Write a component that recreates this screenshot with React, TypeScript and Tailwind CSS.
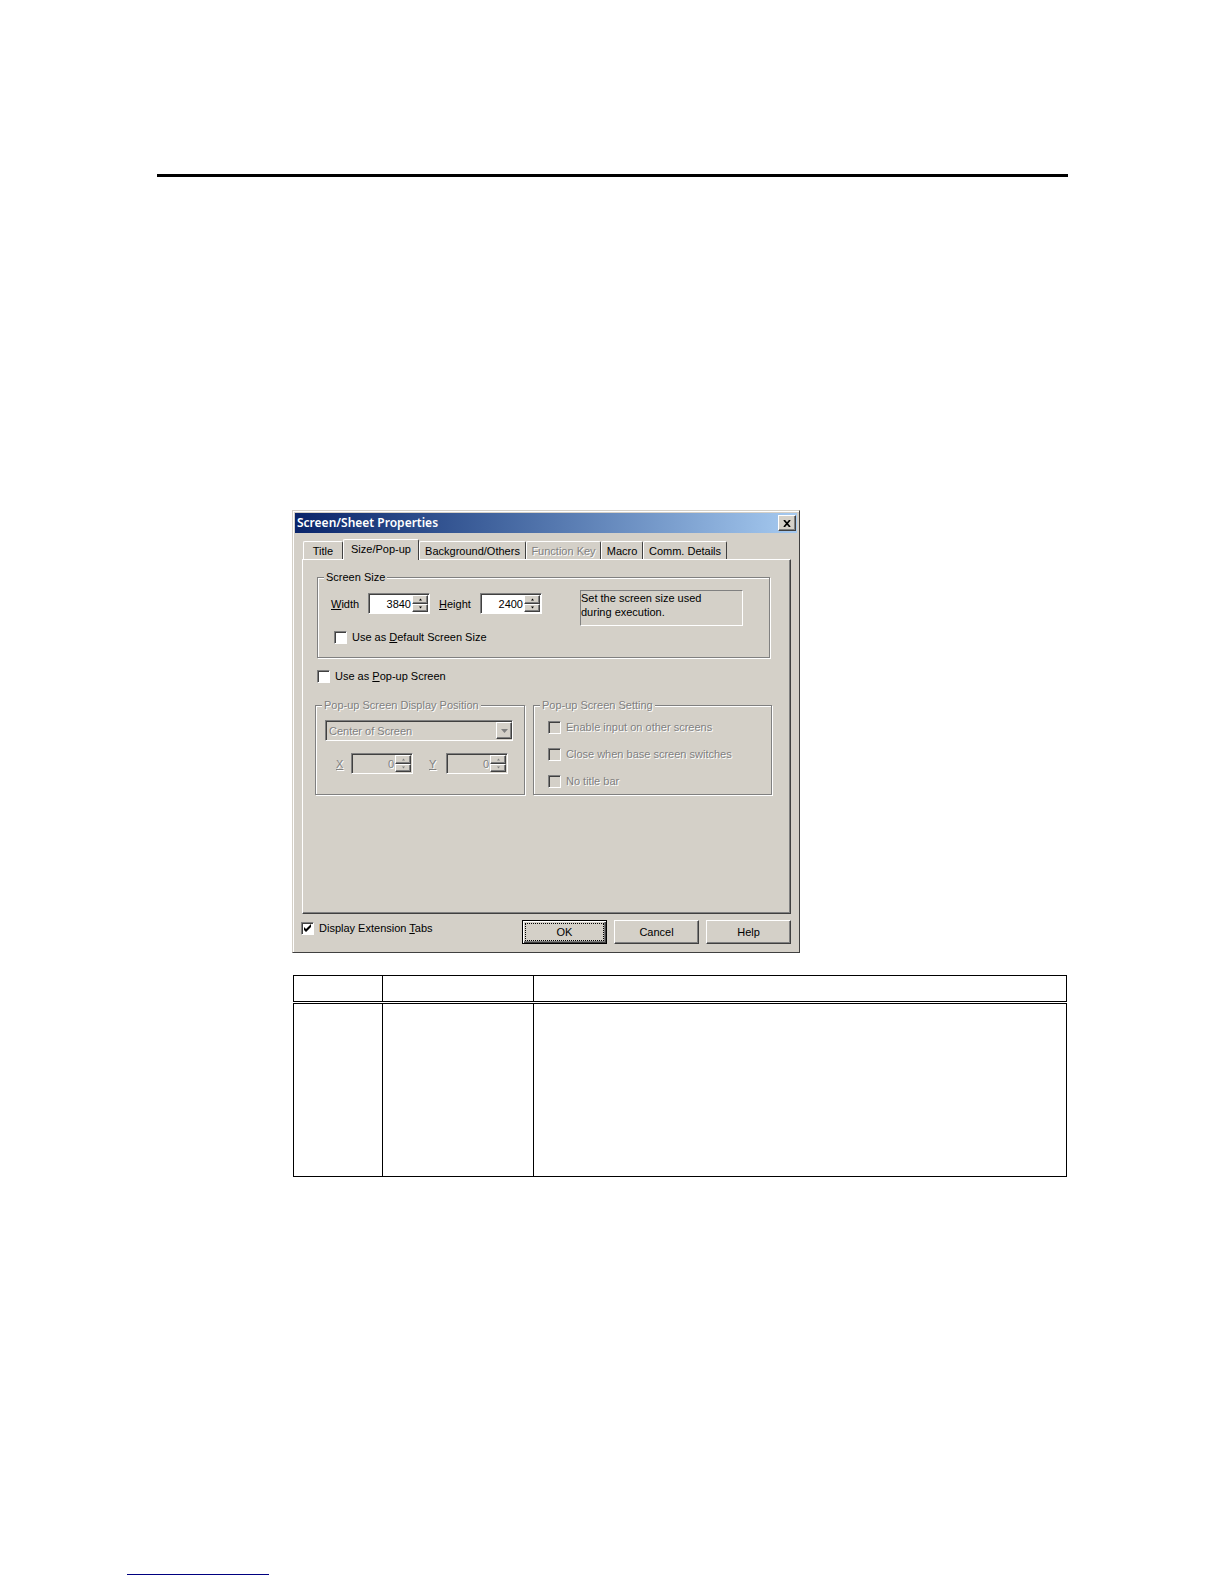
import React, { useState } from 'react';

const raised = 'border border-t-white border-l-white border-r-[#404040] border-b-[#404040] bg-[#d4d0c8] shadow-[inset_-1px_-1px_0_#808080]';
const sunken = 'border border-t-[#808080] border-l-[#808080] border-r-white border-b-white shadow-[inset_1px_1px_0_#404040]';
const disabledText = 'text-[#808080] [text-shadow:1px_1px_0_#fff]';

interface GroupProps {
  title: string;
  disabled?: boolean;
  className?: string;
  bodyClass?: string;
  children: React.ReactNode;
}

const Group: React.FC<GroupProps> = ({ title, disabled, className = '', bodyClass = '', children }) => (
  <fieldset
    disabled={disabled}
    className={`border border-[#808080] shadow-[1px_1px_0_#fff,inset_1px_1px_0_#fff] ${className}`}
  >
    <legend className={`ml-[6px] h-[14px] bg-[#d4d0c8] px-[2px] leading-[14px] ${disabled ? disabledText : ''}`}>
      {title}
    </legend>
    <div className={bodyClass}>{children}</div>
  </fieldset>
);

interface CheckProps {
  checked?: boolean;
  disabled?: boolean;
  children: React.ReactNode;
}

const Check: React.FC<CheckProps> = ({ checked = false, disabled, children }) => {
  const [on, setOn] = useState(checked);
  return (
    <label className={`flex h-4 items-center gap-[5px] ${disabled ? disabledText : ''}`}>
      <span className="relative flex">
        <input
          type="checkbox"
          checked={on}
          disabled={disabled}
          onChange={(e) => setOn(e.target.checked)}
          className={`size-[13px] appearance-none ${sunken} ${disabled ? 'bg-[#d4d0c8]' : 'bg-white'}`}
        />
        {on && (
          <svg viewBox="0 0 13 13" className="pointer-events-none absolute inset-0 size-[13px]">
            <path d="M3 5v3l2 2 5-5V2L5 7z" fill="#000" />
          </svg>
        )}
      </span>
      <span>{children}</span>
    </label>
  );
};

interface SpinProps {
  id: string;
  value: number;
  disabled?: boolean;
}

const Spin: React.FC<SpinProps> = ({ id, value, disabled }) => {
  const [n, setN] = useState(value);
  const fill = disabled ? '#808080' : '#000';
  return (
    <div className={`flex h-[21px] w-[62px] p-px ${sunken} ${disabled ? 'bg-[#d4d0c8]' : 'bg-white'}`}>
      <input
        id={id}
        type="text"
        value={n}
        disabled={disabled}
        onChange={(e) => setN(Number(e.target.value) || 0)}
        className={`w-0 flex-1 bg-transparent pr-px text-right ${disabled ? disabledText : ''}`}
      />
      <div className="flex w-4 flex-col">
        <button type="button" disabled={disabled} onClick={() => setN(n + 1)} className={`flex flex-1 items-center justify-center ${raised}`}>
          <svg viewBox="0 0 5 3" className="h-[3px] w-[5px]"><path d="M1 2.5L2.5 0.5 4 2.5z" fill={fill} /></svg>
        </button>
        <button type="button" disabled={disabled} onClick={() => setN(n - 1)} className={`flex flex-1 items-center justify-center ${raised}`}>
          <svg viewBox="0 0 5 3" className="h-[3px] w-[5px]"><path d="M1 0.5h3L2.5 2.5z" fill={fill} /></svg>
        </button>
      </div>
    </div>
  );
};

const tabs = [
  { name: 'Title', width: 'w-10' },
  { name: 'Size/Pop-up', width: 'w-[76px]' },
  { name: 'Background/Others', width: 'w-[107px]' },
  { name: 'Function Key', width: 'w-[75px]', disabled: true },
  { name: 'Macro', width: 'w-[42px]' },
  { name: 'Comm. Details', width: 'w-[84px]' },
];

const PropertiesDialog: React.FC = () => {
  const [active, setActive] = useState('Size/Pop-up');

  return (
    <div
      role="dialog"
      className="w-[508px] border border-t-[#d4d0c8] border-l-[#d4d0c8] border-r-[#404040] border-b-[#404040] bg-[#d4d0c8] p-[2px] font-['Liberation_Sans',sans-serif] text-[11px] leading-[14px] text-black shadow-[inset_1px_1px_0_#fff]"
    >
      {/* Title bar */}
      <div className="flex h-5 items-center justify-between bg-linear-to-r from-[#0a246a] to-[#a6caf0] pr-px pl-[2px]">
        <h1 className="font-['Noto_Sans',sans-serif] text-[12px] font-semibold text-white">Screen/Sheet Properties</h1>
        <button type="button" className={`flex h-4 w-[18px] items-center justify-center ${raised}`}>
          <svg viewBox="0 0 8 7" className="h-[7px] w-2">
            <path d="M1 0l6 7M7 0L1 7" stroke="#000" strokeWidth="1.7" />
          </svg>
        </button>
      </div>

      {/* Tabs */}
      <div role="tablist" className="flex h-[26px] items-end pl-2">
        {tabs.map((t) => (
          <button
            key={t.name}
            type="button"
            role="tab"
            aria-selected={active === t.name}
            disabled={t.disabled}
            onClick={() => setActive(t.name)}
            className={`rounded-t-[2px] border border-b-0 border-t-white border-l-white border-r-[#404040] whitespace-nowrap ${t.width} ${
              active === t.name ? 'z-10 -mb-px h-[21px] bg-[#d4d0c8] pb-[3px]' : 'h-[18px]'
            } ${t.disabled ? disabledText : ''}`}
          >
            {t.name}
          </button>
        ))}
      </div>

      {/* Tab page */}
      <div className="mr-[6px] ml-[7px] h-[355px] border border-t-white border-l-white border-r-[#404040] border-b-[#404040] px-3 pt-[10px] shadow-[inset_-1px_-1px_0_#808080]">
        <Group title="Screen Size" className="mx-[2px] w-[453px]" bodyClass="pt-[6px] pb-3 pl-[13px]">
          <div className="flex items-start">
            <div className="flex items-center pt-[3px]">
              <label htmlFor="width" className="w-[37px]"><u>W</u>idth</label>
              <Spin id="width" value={3840} />
              <label htmlFor="height" className="ml-[9px] w-[41px]"><u>H</u>eight</label>
              <Spin id="height" value={2400} />
            </div>
            <p className="ml-[38px] h-9 w-[163px] border border-t-[#808080] border-l-[#808080] border-r-white border-b-white">
              Set the screen size used
              <br />
              during execution.
            </p>
          </div>
          <div className="mt-[3px] ml-[3px]">
            <Check>Use as <u>D</u>efault Screen Size</Check>
          </div>
        </Group>

        <div className="mt-[10px] ml-[2px]">
          <Check>Use as <u>P</u>op-up Screen</Check>
        </div>

        <div className="mt-[14px] flex gap-2">
          <Group title="Pop-up Screen Display Position" disabled className="w-[210px]" bodyClass="pt-2 pb-5 pl-[9px]">
            <div className="relative w-[188px]">
              <select
                disabled
                aria-label="Pop-up Screen Display Position"
                className={`block h-[21px] w-full appearance-none bg-[#d4d0c8] pl-[3px] opacity-100 ${sunken} ${disabledText}`}
              >
                <option>Center of Screen</option>
              </select>
              <span className={`pointer-events-none absolute top-[2px] right-px flex h-[17px] w-4 items-center justify-center ${raised}`}>
                <svg viewBox="0 0 7 4" className="h-1 w-[7px]"><path d="M0 0h7L3.5 4z" fill="#808080" /></svg>
              </span>
            </div>
            <div className={`mt-3 flex items-center pl-[11px] ${disabledText}`}>
              <label htmlFor="x" className="w-[15px]"><u>X</u></label>
              <Spin id="x" value={0} disabled />
              <label htmlFor="y" className="ml-4 w-[17px]"><u>Y</u></label>
              <Spin id="y" value={0} disabled />
            </div>
          </Group>
          <Group title="Pop-up Screen Setting" disabled className="w-[239px]" bodyClass="pt-[7px] pl-[14px]">
            <div className="flex flex-col gap-[11px]">
              <Check disabled>Enable input on other screens</Check>
              <Check disabled>Close when base screen switches</Check>
              <Check disabled>No title bar</Check>
            </div>
          </Group>
        </div>
      </div>

      {/* Footer */}
      <div className="flex items-start pt-[6px] pr-[6px] pb-[6px] pl-[6px]">
        <Check checked>Display Extension <u>T</u>abs</Check>
        <div className="ml-auto flex gap-[7px]">
          <button type="button" className="h-6 w-[85px] border border-black p-[2px] shadow-[inset_1px_1px_0_#fff,inset_-1px_-1px_0_#404040,inset_-2px_-2px_0_#808080]">
            <span className="flex h-full items-center justify-center border border-dotted border-black">OK</span>
          </button>
          <button type="button" className={`h-6 w-[85px] ${raised}`}>Cancel</button>
          <button type="button" className={`h-6 w-[85px] ${raised}`}>Help</button>
        </div>
      </div>
    </div>
  );
};

export default function App() {
  return (
    <div className="min-h-screen bg-white">
      <main className="pt-[174px] pr-[156px] pl-[157px]">
        <hr className="h-[3px] border-0 bg-black" />
        <section className="mt-[333px] ml-[135px]">
          <PropertiesDialog />
          <div className="mt-[22px] px-px">
            <table className="w-full table-fixed border-collapse border border-black">
              <colgroup>
                <col className="w-[89px]" />
                <col className="w-[151px]" />
                <col />
              </colgroup>
              <thead>
                <tr className="h-[27px]">
                  <th className="border border-b-[3px] border-black [border-bottom-style:double]"></th>
                  <th className="border border-b-[3px] border-black [border-bottom-style:double]"></th>
                  <th className="border border-b-[3px] border-black [border-bottom-style:double]"></th>
                </tr>
              </thead>
              <tbody>
                <tr className="h-[174px]">
                  <td className="border border-black"></td>
                  <td className="border border-black"></td>
                  <td className="border border-black"></td>
                </tr>
              </tbody>
            </table>
          </div>
        </section>
      </main>
      <footer className="pt-[374px] pb-[9px] pl-[127px]">
        <a href="#" className="block h-6 w-[142px] border-b border-[#000080]"></a>
      </footer>
    </div>
  );
}
